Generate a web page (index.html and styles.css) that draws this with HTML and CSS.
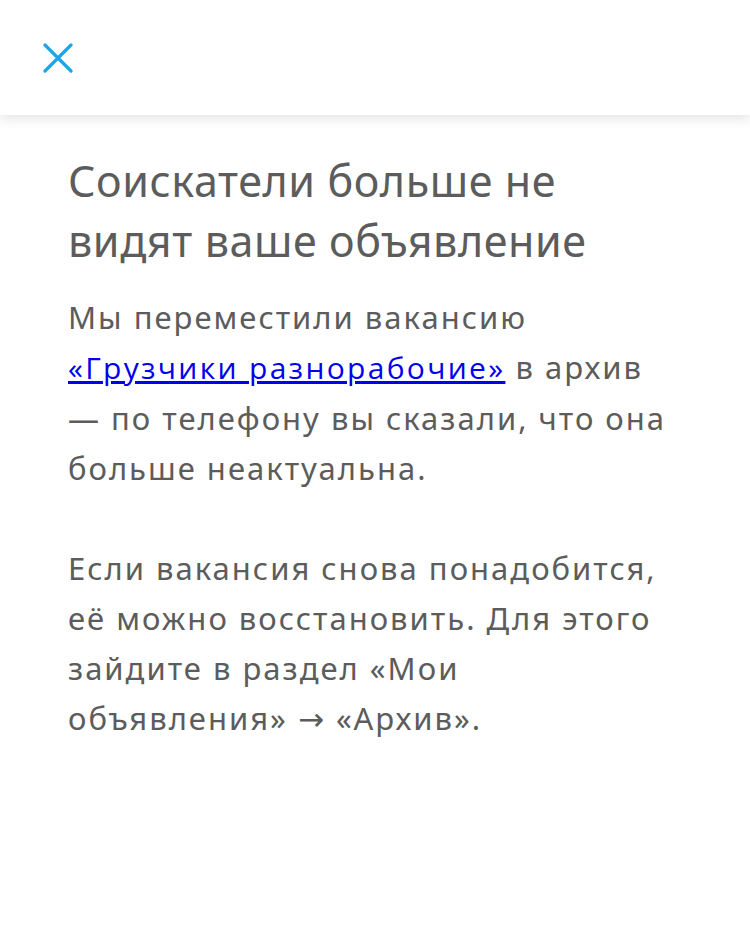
FILE: index.html
```html
<!DOCTYPE html>
<html lang="ru">
<head>
<meta charset="utf-8">
<link rel="stylesheet" href="styles.css">
</head>
<body>
<header class="topbar">
  <button class="close" aria-label="Закрыть">
    <svg width="30" height="30" viewBox="0 0 30 30"><path d="M2 2L28 28M28 2L2 28" stroke="#1ea5e9" stroke-width="3.2" stroke-linecap="round" fill="none"/></svg>
  </button>
</header>
<main class="content">
  <h1 class="title">Соискатели больше не видят ваше объявление</h1>
  <p class="text">Мы переместили вакансию <a class="link" href="#">«Грузчики разнорабочие»</a> в архив —&nbsp;по телефону вы сказали, что она больше неактуальна.</p>
  <p class="text">Если вакансия снова понадобится, её можно восстановить. Для этого зайдите в раздел «Мои объявления» <span class="arrow">→</span> «Архив».</p>
</main>
</body>
</html>
```
FILE: styles.css
```css
html, body {
  margin: 0;
  padding: 0;
  background: #ffffff;
}
body {
  font-family: "Noto Sans", "Open Sans", sans-serif;
  color: #5c5c5c;
}
.topbar {
  height: 115px;
  background: #fff;
  box-shadow: 0 3px 12px rgba(0, 0, 0, 0.12);
  display: flex;
  align-items: center;
  padding-left: 43px;
  position: relative;
}
.close {
  border: 0;
  background: none;
  padding: 0;
  width: 30px;
  height: 30px;
  display: flex;
}
.content {
  padding: 36px 68px 0 68px;
}
.title {
  margin: 0;
  font-size: 43px;
  line-height: 60px;
  font-weight: 400;
  letter-spacing: 0.6px;
}
.text {
  margin: 21px 0 0 0;
  font-size: 31px;
  line-height: 50px;
  letter-spacing: 2px;
}
.text + .text {
  margin-top: 50px;
}
.link {
  font-family: "Open Sans", "Noto Sans", sans-serif;
  font-size: 30px;
  letter-spacing: 2.3px;
  color: #0000ee;
}
.arrow {
  font-family: "DejaVu Sans", sans-serif;
}
```
